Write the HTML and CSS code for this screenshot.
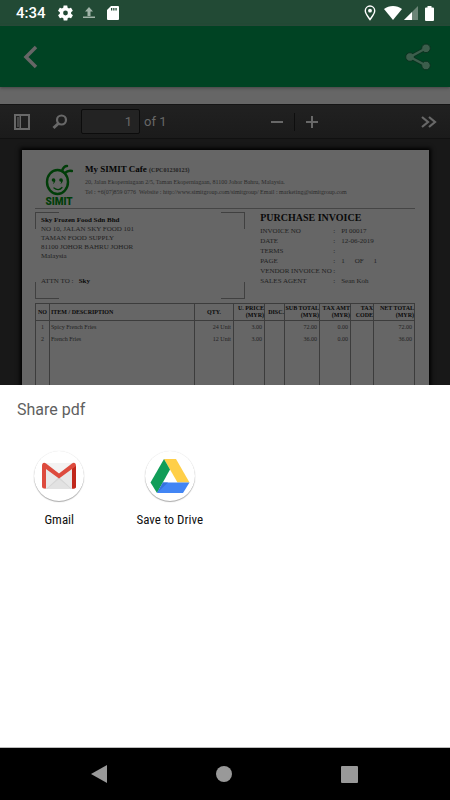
FILE: index.html
```html
<!DOCTYPE html>
<html lang="en">
  <head>
    <meta charset="UTF-8" />
    <meta name="viewport" content="width=device-width, initial-scale=1.0" />
    <title>Share pdf</title>
    <link rel="stylesheet" href="styles.css">
  </head>
  <body>
    <div class="statusbar">
      <span class="clock">4:34</span>
      <svg class="gear" width="15" height="16" viewBox="2 2 20 20"><path fill="#fff" d="M19.4 13c0-.3.1-.6.1-1s0-.7-.1-1l2.1-1.600c.2-.2.2-.4.1-.6l-2-3.500c-.1-.2-.4-.3-.6-.2l-2.500 1c-.5-.4-1.100-.7-1.700-1l-.4-2.600c0-.3-.2-.5-.5-.5h-4c-.3 0-.5.2-.5.500l-.4 2.600c-.6.300-1.200.6-1.700 1l-2.500-1c-.2-.1-.5 0-.6.200l-2 3.500c-.1.2-.1.400.1.600L4.500 11c0 .3-.1.600-.1 1s0 .7.1 1l-2.100 1.600c-.2.2-.2.400-.1.600l2 3.500c.1.200.4.300.6.200l2.500-1c.5.400 1.100.7 1.700 1l.4 2.600c0 .3.2.500.5.500h4c.3 0 .5-.2.500-.500l.4-2.600c.6-.3 1.200-.6 1.700-1l2.500 1c.2.100.5 0 .6-.2l2-3.500c.1-.2.100-.4-.1-.6zM12 15.200a3.200 3.200 0 1 1 0-6.400 3.200 3.200 0 0 1 0 6.400z"/></svg>
      <svg class="upload" width="14" height="14" viewBox="0 0 14 14"><path fill="#a0b3a8" d="M7 1l4 4.500H8.500V10h-3V5.500H3zM1 10.500h12V12H1z"/></svg>
      <svg width="12" height="14" viewBox="0 0 12 14"><path fill="#fff" d="M4 0h7a1 1 0 0 1 1 1v12a1 1 0 0 1-1 1H1a1 1 0 0 1-1-1V4z"/><path fill="#224a35" d="M4 2h1.300v2.500H4zm2.200 0h1.300v2.500H6.200zm2.200 0h1.300v2.500H8.400z"/></svg>
      <div class="signals">
        <svg class="pin" width="12" height="16" viewBox="0 0 12 16"><path fill="none" stroke="#fff" stroke-width="1.400" d="M6 14.500C4 11.500 1.300 8.700 1.300 5.700a4.700 4.700 0 0 1 9.400 0C10.700 8.700 8 11.500 6 14.500z"/><circle cx="6" cy="5.700" r="1.900" fill="#fff"/></svg>
        <svg width="18" height="14" viewBox="0 0 18 14"><path fill="#fff" d="M9 14L0 3C5-1 13-1 18 3z"/></svg>
        <svg class="cell" width="14" height="14" viewBox="0 0 14 14"><path fill="#6c8577" d="M14 0v14H0z"/><path fill="#fff" d="M8 6v8H0z"/></svg>
        <svg width="9" height="15" viewBox="0 0 9 15"><path fill="#fff" d="M2.500 0h4v1.500H8a1 1 0 0 1 1 1V14a1 1 0 0 1-1 1H1a1 1 0 0 1-1-1V2.500a1 1 0 0 1 1-1h1.500z"/></svg>
      </div>
    </div>

    <header class="appbar">
      <button class="icon-btn" aria-label="Back">
        <svg width="16" height="24" viewBox="0 0 16 24"><path fill="none" stroke="#666" stroke-width="3.500" d="M14 2L4 12l10 10"/></svg>
      </button>
      <button class="icon-btn" aria-label="Share">
        <svg width="26" height="28" viewBox="0 0 26 28"><path fill="none" stroke="#0b3320" stroke-width="4" d="M21 5.300L5 14l16 8.500"/><g fill="#3c5e4c" stroke="#0b3320"><circle cx="5" cy="14" r="4.300"/><circle cx="21" cy="5.300" r="4.300"/><circle cx="21" cy="22.500" r="4.300"/></g><path fill="none" stroke="#3c5e4c" stroke-width="2.400" d="M21 5.300L5 14l16 8.500"/></svg>
      </button>
    </header>

    <main class="viewer">
      <div class="toolbar">
        <button class="icon-btn" aria-label="Toggle sidebar">
          <svg width="16" height="16" viewBox="0 0 16 16"><path fill="none" stroke="#686868" stroke-width="2" d="M1 1h14v14H1z"/><path fill="#484848" d="M3 3h2v10H3z"/><path fill="#686868" d="M5.500 2h1.500v12H5.500z"/></svg>
        </button>
        <button class="icon-btn search" aria-label="Find">
          <svg width="16" height="16" viewBox="0 0 16 16"><circle cx="9.500" cy="6" r="4.500" fill="none" stroke="#686868" stroke-width="2.200"/><path stroke="#686868" stroke-width="3" d="M6.300 9.500L1.500 14"/></svg>
        </button>
        <input class="page-number" id="page" type="text" value="1" />
        <label class="page-count" for="page">of 1</label>
        <div class="zoom">
          <button class="icon-btn" aria-label="Zoom out"><svg width="12" height="12" viewBox="0 0 12 12"><path fill="#686868" d="M0 5h12v2H0z"/></svg></button>
          <span class="separator"></span>
          <button class="icon-btn" aria-label="Zoom in"><svg width="12" height="12" viewBox="0 0 12 12"><path fill="#686868" d="M0 5h5V0h2v5h5v2H7v5H5V7H0z"/></svg></button>
        </div>
        <button class="icon-btn" aria-label="Tools">
          <svg width="16" height="12" viewBox="0 0 16 12"><path fill="none" stroke="#686868" stroke-width="2.200" d="M1 1l6 5-6 5M8 1l6 5-6 5"/></svg>
        </button>
      </div>

      <div class="pages">
        <article class="page">
          <div class="company">
            <div class="logo">
              <svg width="28" height="32" viewBox="0 0 28 32">
                <g fill="none" stroke="#003d08" stroke-linecap="round">
                  <ellipse cx="12.500" cy="18" rx="10.500" ry="12" stroke-width="2.400"/>
                  <path stroke-width="2.500" d="M17 7c1-3 2-5 5-5M20 9c2-2 4-3 7-2"/>
                  <path stroke-width="1.300" d="M9 24c3 2.500 6 2 8-.500"/>
                </g>
                <g fill="#003d08"><circle cx="8.500" cy="16" r="1.800"/><circle cx="16" cy="16" r="1.800"/><path d="M10.300 16c0 2-1 3.500-2.500 4 .8-1 1-2 .7-3zM17.800 16c0 2-1 3.500-2.500 4 .8-1 1-2 .7-3z"/></g>
              </svg>
              <span>SIMIT</span>
            </div>
            <div class="company-text">
              <h1>My SIMIT Cafe <small>(CPC01230123)</small></h1>
              <p>20, Jalan Ekoperniagaan 2/5, Taman Ekoperniagaan, 81100 Johor Bahru, Malaysia.</p>
              <p>Tel : +6(07)859 0776 &nbsp;Website : http://www.simitgroup.com/simitgroup/ Email : marketing@simitgroup.com</p>
            </div>
          </div>

          <div class="details">
            <address class="supplier">
              <strong>Sky Frozen Food Sdn Bhd</strong>
              <span>NO 10, JALAN SKY FOOD 101</span>
              <span>TAMAN FOOD SUPPLY</span>
              <span>81100 JOHOR BAHRU JOHOR</span>
              <span>Malaysia</span>
              <span class="attn">ATTN TO : &nbsp; <b>Sky</b></span>
            </address>
            <div class="invoice">
              <h2>PURCHASE INVOICE</h2>
              <dl>
                <dt>INVOICE NO</dt><dd>:</dd><dd>PI 00017</dd>
                <dt>DATE</dt><dd>:</dd><dd>12-06-2019</dd>
                <dt>TERMS</dt><dd>:</dd><dd></dd>
                <dt>PAGE</dt><dd>:</dd><dd class="of"><span>1</span><span>OF</span><span>1</span></dd>
                <dt>VENDOR INVOICE NO</dt><dd>:</dd><dd></dd>
                <dt>SALES AGENT</dt><dd>:</dd><dd>Sean Koh</dd>
              </dl>
            </div>
          </div>

          <table class="items">
            <colgroup>
              <col class="c-no"><col><col class="c-qty"><col class="c-price"><col class="c-disc"><col class="c-sub"><col class="c-amt"><col class="c-code"><col class="c-net">
            </colgroup>
            <thead>
              <tr>
                <th class="center">NO</th>
                <th class="left">ITEM / DESCRIPTION</th>
                <th class="center">QTY.</th>
                <th>U. PRICE<br>(MYR)</th>
                <th>DISC.</th>
                <th>SUB TOTAL<br>(MYR)</th>
                <th>TAX AMT<br>(MYR)</th>
                <th>TAX<br>CODE</th>
                <th>NET TOTAL<br>(MYR)</th>
              </tr>
            </thead>
            <tbody>
              <tr><td class="center">1</td><td class="left">Spicy French Fries</td><td>24 Unit</td><td>3.00</td><td></td><td>72.00</td><td>0.00</td><td></td><td>72.00</td></tr>
              <tr><td class="center">2</td><td class="left">French Fries</td><td>12 Unit</td><td>3.00</td><td></td><td>36.00</td><td>0.00</td><td></td><td>36.00</td></tr>
              <tr class="blank"><td></td><td></td><td></td><td></td><td></td><td></td><td></td><td></td><td></td></tr>
            </tbody>
          </table>
        </article>
      </div>
    </main>

    <section class="sheet">
      <h2>Share pdf</h2>
      <div class="apps">
        <button class="app">
          <span class="app-icon">
            <svg width="36" height="28" viewBox="0 0 36 28">
              <path fill="#e8e8e8" d="M3 1h30v26H3z"/>
              <path fill="#d6d6d6" d="M5 27l13-12 13 12z"/>
              <path fill="#e2e2e2" d="M6 27l12-10 12 10z"/>
              <path fill="#f3f3f3" d="M5 1h26L18 12z"/>
              <path fill="#dd4b3e" d="M1 4c0-3 2-4 4-2.500L18 11.500l13-10C33 0 35 1 35 4v20.500a2 2 0 0 1-2 2h-2V7L18 16.500 5 7v19.500H3a2 2 0 0 1-2-2z"/>
              <path fill="#c1271b" d="M31 7l4-3v20.500a2 2 0 0 1-2 2h-2z"/>
            </svg>
          </span>
          Gmail
        </button>
        <button class="app">
          <span class="app-icon">
            <svg width="40" height="36" viewBox="0 0 40 36">
              <path fill="#ffcf48" d="M14 1h12l13.500 23.500H27.500z"/>
              <path fill="#109d58" d="M14 1l6 10.500L7 35 .5 24.500z"/>
              <path fill="#4285f4" d="M13 24.500h26.500L33 35H7z"/>
              <path fill="#3572dc" d="M13 24.500L7 35l11-10.500z"/>
            </svg>
          </span>
          Save to Drive
        </button>
      </div>
    </section>

    <nav class="navbar">
      <button class="icon-btn" aria-label="Back"><svg width="18" height="18" viewBox="0 0 18 18"><path fill="#999" d="M1 9L17 0v18z"/></svg></button>
      <button class="icon-btn" aria-label="Home"><svg width="18" height="18" viewBox="0 0 18 18"><circle cx="9" cy="9" r="8" fill="#999"/></svg></button>
      <button class="icon-btn" aria-label="Recent apps"><svg width="18" height="18" viewBox="0 0 18 18"><rect x="1" y="1" width="17" height="17" rx="1" fill="#999"/></svg></button>
    </nav>
  </body>
</html>
```

FILE: styles.css
```css
* {
  box-sizing: border-box;
}

body {
  display: flex;
  flex-direction: column;
  min-height: 100vh;
  margin: 0;
  background: #666;
  font-family: Roboto, "Liberation Sans", sans-serif;
}

h1, h2, p, dl, dd {
  margin: 0;
}

svg {
  display: block;
}

.icon-btn {
  display: flex;
  padding: 0;
  border: 0;
  background: none;
}

/* status bar */
.statusbar {
  display: flex;
  align-items: center;
  height: 26px;
  padding: 0 16px;
  background: #224a35;
  color: #fff;
}

.clock {
  font-size: 15px;
  font-weight: 500;
}

.gear {
  margin-left: 12px;
}

.upload {
  margin: 0 11px 0 9px;
}

.signals {
  display: flex;
  align-items: center;
  gap: 7px;
  margin-left: auto;
}

.pin {
  margin-right: 1px;
}

.cell {
  margin-left: -5px;
}

/* app bar */
.appbar {
  display: flex;
  align-items: center;
  justify-content: space-between;
  height: 61px;
  padding: 0 19px 0 22px;
  background: #004323;
  box-shadow: 0 1px 3px #444;
}

/* pdf viewer */
.viewer {
  margin-top: 17px;
  background: #181818;
}

.toolbar {
  display: flex;
  align-items: center;
  height: 35px;
  padding: 0 13px 0 14px;
  border-top: 1px solid #151515;
  border-bottom: 1px solid #111;
  background: linear-gradient(#212121, #1b1b1b);
  color: #686868;
}

.search {
  margin: 0 13px 0 22px;
}

.page-number {
  width: 59px;
  height: 25px;
  padding: 0 7px;
  border: 1px solid #0c0c0c;
  border-radius: 2px;
  background: #232323;
  color: #686868;
  font: 13px Roboto, "Liberation Sans", sans-serif;
  text-align: right;
}

.page-count {
  margin-left: 4px;
  font-size: 13px;
}

.zoom {
  display: flex;
  align-items: center;
  gap: 11px;
  margin: 0 103px 0 auto;
}

.separator {
  width: 1px;
  height: 18px;
  background: #0e0e0e;
}

.pages {
  padding: 11px 21px 0 22px;
}

.page {
  padding: 14px 14px 0 13px;
  background: #666;
  box-shadow: 0 0 4px 2px #000;
  color: #222;
  font-family: "Liberation Serif", serif;
  font-size: 7px;
}

.company {
  display: flex;
  gap: 12px;
  height: 45px;
  border-bottom: 1px solid #454545;
}

.logo {
  display: flex;
  flex-direction: column;
  align-items: center;
  width: 28px;
  margin-left: 10px;
  color: #003d08;
  font: 900 10px/12px Roboto, "Liberation Sans", sans-serif;
}

.company-text h1 {
  color: #050505;
  font-size: 9px;
  line-height: 10px;
}

.company-text small {
  color: #222;
  font-size: 6px;
}

.company-text p {
  color: #2c2c2c;
  font-size: 6px;
  line-height: 10px;
  white-space: nowrap;
}

.company-text h1 + p {
  margin-top: 2px;
}

.details {
  display: grid;
  grid-template-columns: 209fr 154fr;
  gap: 15px;
  padding: 3px 0 4px;
}

/* only the corners of the box are ruled */
.supplier {
  --rule: linear-gradient(#404040, #404040);
  display: flex;
  flex-direction: column;
  padding: 4px 6px;
  background:
    var(--rule) 0 0 / 24px 1px, var(--rule) 0 0 / 1px 17px,
    var(--rule) 100% 0 / 24px 1px, var(--rule) 100% 0 / 1px 17px,
    var(--rule) 0 100% / 24px 1px, var(--rule) 0 100% / 1px 17px,
    var(--rule) 100% 100% / 24px 1px, var(--rule) 100% 100% / 1px 17px;
  background-repeat: no-repeat;
  font-style: normal;
  line-height: 9px;
}

.supplier strong,
.supplier b {
  color: #0a0a0a;
}

.supplier .attn {
  margin: auto 0 9px;
}

.invoice h2 {
  color: #0a0a0a;
  font-size: 10px;
  line-height: 12px;
}

.invoice dl {
  display: grid;
  grid-template-columns: 73px 8px 1fr;
  margin-top: 2px;
  padding-bottom: 13px;
  line-height: 10px;
}

.of {
  display: flex;
  gap: 10px;
}

.items {
  width: 100%;
  border-collapse: collapse;
  table-layout: fixed;
}

.items th,
.items td {
  padding: 0 2px;
  border: 1px solid #3c3c3c;
  text-align: right;
  white-space: nowrap;
}

.items th {
  height: 17px;
  padding: 0;
  color: #0a0a0a;
  font-size: 6px;
  line-height: 7px;
}

.items td {
  height: 12px;
  border-top: 0;
  border-bottom: 0;
  font-size: 6px;
}

.items .left {
  padding-left: 1px;
  text-align: left;
}

.items .center {
  text-align: center;
}

.items .blank td {
  height: 40px;
}

.c-no { width: 14px; }
.c-qty { width: 39px; }
.c-price { width: 31px; }
.c-disc { width: 20px; }
.c-sub { width: 35px; }
.c-amt { width: 31px; }
.c-code { width: 23px; }
.c-net { width: 41px; }

/* share sheet */
.sheet {
  position: relative;
  flex: 1;
  padding: 15px 4px;
  border-bottom: 1px solid #bbb;
  background: #fff;
}

.sheet h2 {
  padding-left: 13px;
  color: #5f5f5f;
  font-size: 16px;
  font-weight: 400;
  line-height: 20px;
}

.apps {
  display: grid;
  grid-template-columns: repeat(4, 1fr);
  margin-top: 31px;
}

.app {
  display: flex;
  flex-direction: column;
  align-items: center;
  gap: 11px;
  padding: 0;
  border: 0;
  background: none;
  color: #111;
  font: 13px/16px "Roboto Condensed", Roboto, "Liberation Sans", sans-serif;
}

.app-icon {
  display: grid;
  place-items: center;
  width: 50px;
  height: 50px;
  border-radius: 50%;
  box-shadow: 0 1px 1px #aaa, 0 0 1px #ddd;
}

/* system navigation */
.navbar {
  display: flex;
  align-items: center;
  justify-content: space-between;
  height: 52px;
  padding: 0 92px 0 90px;
  background: #000;
}
```
